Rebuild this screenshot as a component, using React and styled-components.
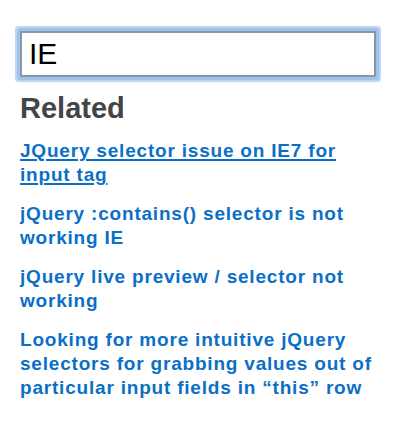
import React from 'react'
import styled, { createGlobalStyle } from 'styled-components'

const GlobalStyle = createGlobalStyle`
  body {
    margin: 0;
    background: #fff;
    font-family: "Liberation Sans", Arial, sans-serif;
  }
`

const links = [
  { title: 'JQuery selector issue on IE7 for input tag', active: true },
  { title: 'jQuery :contains() selector is not working IE' },
  { title: 'jQuery live preview / selector not working' },
  { title: 'Looking for more intuitive jQuery selectors for grabbing values out of particular input fields in \u201cthis\u201d row' },
]

function App() {
  return (
    <>
      <GlobalStyle />
      <Panel>
        <Search defaultValue="IE" />
        <Heading>Related</Heading>
        <List>
          {links.map((l) => (
            <li key={l.title}>
              <Link href="#" $active={l.active}>{l.title}</Link>
            </li>
          ))}
        </List>
      </Panel>
    </>
  )
}

const Panel = styled.div`
  padding: 31px 0 0 20px;
  width: 356px;
`

const Search = styled.input`
  display: block;
  box-sizing: border-box;
  width: 356px;
  height: 46px;
  margin: 0;
  padding: 0 7px;
  border: 2px solid #8a96a2;
  border-radius: 1px;
  outline: none;
  box-shadow: 0 0 0 3px #9ec3ea, 0 0 1px 5px #bcd5f1;
  font-family: "Liberation Sans", Arial, sans-serif;
  font-size: 30px;
  color: #000;
  background: #fff;
`

const Heading = styled.h2`
  margin: 14px 0 0;
  font-size: 29px;
  line-height: 34px;
  font-weight: bold;
  color: #444;
`

const List = styled.ul`
  list-style: none;
  margin: 14px 0 0;
  padding: 0;
  display: flex;
  flex-direction: column;
  gap: 15px;
`

const Link = styled.a`
  display: block;
  font-size: 19px;
  line-height: 24px;
  font-weight: bold;
  letter-spacing: 0.8px;
  color: #0b6fc6;
  text-decoration: ${(p) => (p.$active ? 'underline' : 'none')};
  text-decoration-thickness: 2px;
  text-underline-offset: 2px;
`

export default App
